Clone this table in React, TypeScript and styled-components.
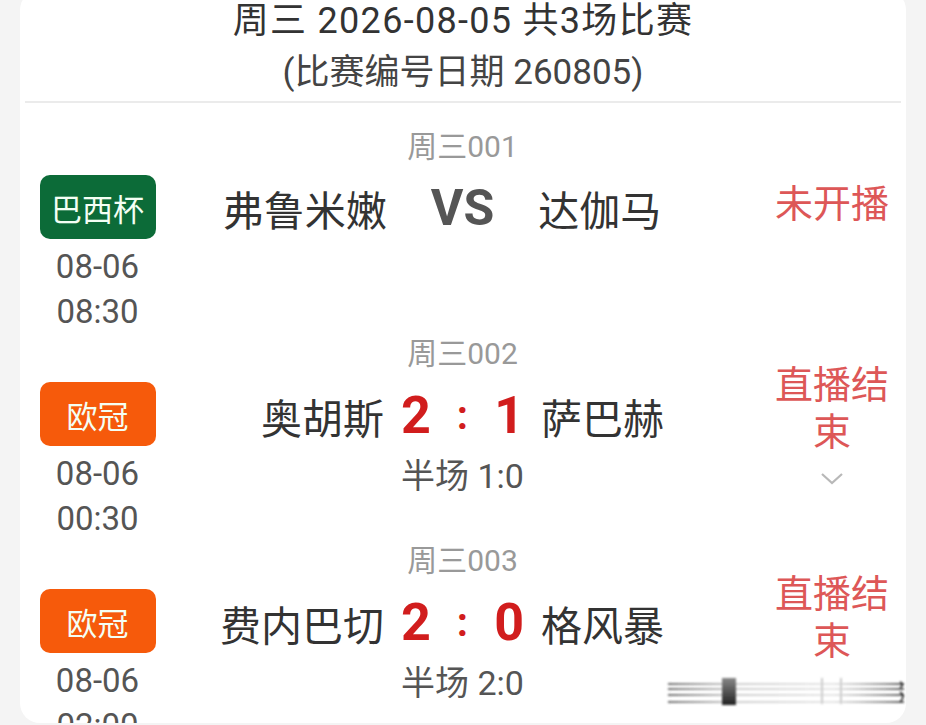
import React from 'react';
import styled, { createGlobalStyle } from 'styled-components';

const Global = createGlobalStyle`
  html, body { margin: 0; padding: 0; background: #f4f4f4; overflow: hidden; }
  body { font-family: Roboto, "Noto Sans CJK SC", sans-serif; }
`;

const Page = styled.div`
  position: relative;
  width: 926px;
  height: 725px;
  overflow: hidden;
  background: #f4f4f4;
`;

const Card = styled.div`
  margin: -10px 20px 0;
  height: 733px;
  background: #fff;
  border-radius: 20px;
  overflow: hidden;
`;

const Header = styled.header`
  padding-top: 7px;
  text-align: center;
  color: #333;
`;

const Title = styled.div`
  font-size: 36px;
  line-height: 48px;
  letter-spacing: 1.3px;
`;

const Sub = styled.div`
  font-size: 35px;
  line-height: 48px;
  margin-top: 4px;
  color: #444;
`;

const Divider = styled.div`
  height: 2px;
  background: #ebebeb;
  margin: 4px 5px 0;
`;

const List = styled.div`
  padding-top: 24px;
`;

const Row = styled.div`
  display: grid;
  grid-template-columns: 155px 1fr 140px;
  height: 207px;
  padding-right: 4px;
`;

const LeftCol = styled.div`
  display: flex;
  flex-direction: column;
  align-items: center;
  padding-top: 48px;
`;

const Badge = styled.div<{ $bg: string }>`
  width: 116px;
  height: 64px;
  border-radius: 10px;
  background: ${(p) => p.$bg};
  color: #f4fff4;
  font-size: 31px;
  display: flex;
  align-items: center;
  justify-content: center;
  margin-bottom: 5px;
`;

const DateLine = styled.div`
  font-size: 33px;
  line-height: 45px;
  color: #555;
`;

const CenterCol = styled.div`
  display: flex;
  flex-direction: column;
  padding-right: 12px;
`;

const MatchNo = styled.div`
  text-align: center;
  font-size: 30px;
  line-height: 40px;
  color: #999;
`;

const Teams = styled.div<{ $gap: number }>`
  display: grid;
  grid-template-columns: 1fr auto 1fr;
  align-items: center;
  column-gap: ${(p) => p.$gap}px;
  height: 60px;
  margin-top: 11px;
`;

const TeamName = styled.div<{ $align: 'left' | 'right' }>`
  font-size: 41px;
  color: #333;
  text-align: ${(p) => p.$align};
  white-space: nowrap;
`;

const VS = styled.div`
  font-size: 50px;
  font-weight: 700;
  color: #555;
  padding: 0 24px;
`;

const Score = styled.div`
  display: flex;
  align-items: center;
  gap: 26px;
  color: #d11d1d;
  font-weight: 700;
`;

const ScoreNum = styled.span`
  font-size: 52px;
`;

const Colon = styled.span`
  font-size: 40px;
`;

const Half = styled.div`
  text-align: center;
  font-size: 34px;
  line-height: 44px;
  margin-top: 9px;
  color: #555;
`;

const RightCol = styled.div<{ $top: number }>`
  display: flex;
  flex-direction: column;
  align-items: center;
  padding-top: ${(p) => p.$top}px;
`;

const Status = styled.div`
  width: 140px;
  text-align: center;
  font-size: 38px;
  line-height: 47px;
  color: #dd5757;
`;

const Chevron = styled.svg`
  margin-top: 16px;
`;

const Overlay = styled.svg`
  position: absolute;
  left: 664px;
  top: 674px;
`;

type Match = {
  no: string;
  league: string;
  color: string;
  date: string;
  time: string;
  home: string;
  away: string;
  score?: [string, string];
  half?: string;
  status: string;
  statusTop: number;
  expand?: boolean;
};

const matches: Match[] = [
  { no: '周三001', league: '巴西杯', color: '#0c6b38', date: '08-06', time: '08:30', home: '弗鲁米嫩', away: '达伽马', status: '未开播', statusTop: 54 },
  { no: '周三002', league: '欧冠', color: '#f65a0b', date: '08-06', time: '00:30', home: '奥胡斯', away: '萨巴赫', score: ['2', '1'], half: '半场 1:0', status: '直播结束', statusTop: 28, expand: true },
  { no: '周三003', league: '欧冠', color: '#f65a0b', date: '08-06', time: '02:00', home: '费内巴切', away: '格风暴', score: ['2', '0'], half: '半场 2:0', status: '直播结束', statusTop: 30 },
];

export default function App() {
  return (
    <Page>
      <Global />
      <Card>
        <Header>
          <Title>周三 2026-08-05 共3场比赛</Title>
          <Sub>(比赛编号日期 260805)</Sub>
          <Divider />
        </Header>
        <List>
          {matches.map((m) => (
            <Row key={m.no}>
              <LeftCol>
                <Badge $bg={m.color}>{m.league}</Badge>
                <DateLine>{m.date}</DateLine>
                <DateLine>{m.time}</DateLine>
              </LeftCol>
              <CenterCol>
                <MatchNo>{m.no}</MatchNo>
                <Teams $gap={m.score ? 17 : 20}>
                  <TeamName $align="right">{m.home}</TeamName>
                  {m.score ? (
                    <Score>
                      <ScoreNum>{m.score[0]}</ScoreNum>
                      <Colon>:</Colon>
                      <ScoreNum>{m.score[1]}</ScoreNum>
                    </Score>
                  ) : (
                    <VS>VS</VS>
                  )}
                  <TeamName $align="left">{m.away}</TeamName>
                </Teams>
                {m.half && <Half>{m.half}</Half>}
              </CenterCol>
              <RightCol $top={m.statusTop}>
                <Status>{m.status}</Status>
                {m.expand && (
                  <Chevron width="24" height="14" viewBox="0 0 24 14">
                    <polyline points="2,2 12,11 22,2" fill="none" stroke="#b8b8b8" strokeWidth="2.2" />
                  </Chevron>
                )}
              </RightCol>
            </Row>
          ))}
        </List>
      </Card>
      <Overlay width="246" height="36" viewBox="0 0 246 36">
        <defs>
          <linearGradient id="ln" x1="0" x2="1" y1="0" y2="0">
            <stop offset="0" stopColor="#333" stopOpacity="0.7" />
            <stop offset="0.3" stopColor="#777" stopOpacity="0.35" />
            <stop offset="0.7" stopColor="#999" stopOpacity="0.25" />
            <stop offset="1" stopColor="#333" stopOpacity="0.8" />
          </linearGradient>
          <linearGradient id="blk" x1="0" x2="0" y1="0" y2="1">
            <stop offset="0" stopColor="#888" />
            <stop offset="1" stopColor="#222" />
          </linearGradient>
          <filter id="bl"><feGaussianBlur stdDeviation="0.8" /></filter>
        </defs>
        <g filter="url(#bl)">
          <rect x="4" y="9" width="236" height="2" fill="url(#ln)" />
          <rect x="4" y="14" width="236" height="2" fill="url(#ln)" />
          <rect x="4" y="20" width="236" height="2" fill="url(#ln)" />
          <rect x="4" y="27" width="236" height="2" fill="url(#ln)" />
          <rect x="58" y="4" width="14" height="27" fill="url(#blk)" />
          <rect x="157" y="4" width="2" height="26" fill="#ccc" />
          <rect x="176" y="4" width="2" height="26" fill="#ccc" />
          <path d="M236 8 q5 2 0 6 M236 18 q6 4 0 10" stroke="#222" strokeWidth="1.6" fill="none" />
        </g>
      </Overlay>
    </Page>
  );
}
